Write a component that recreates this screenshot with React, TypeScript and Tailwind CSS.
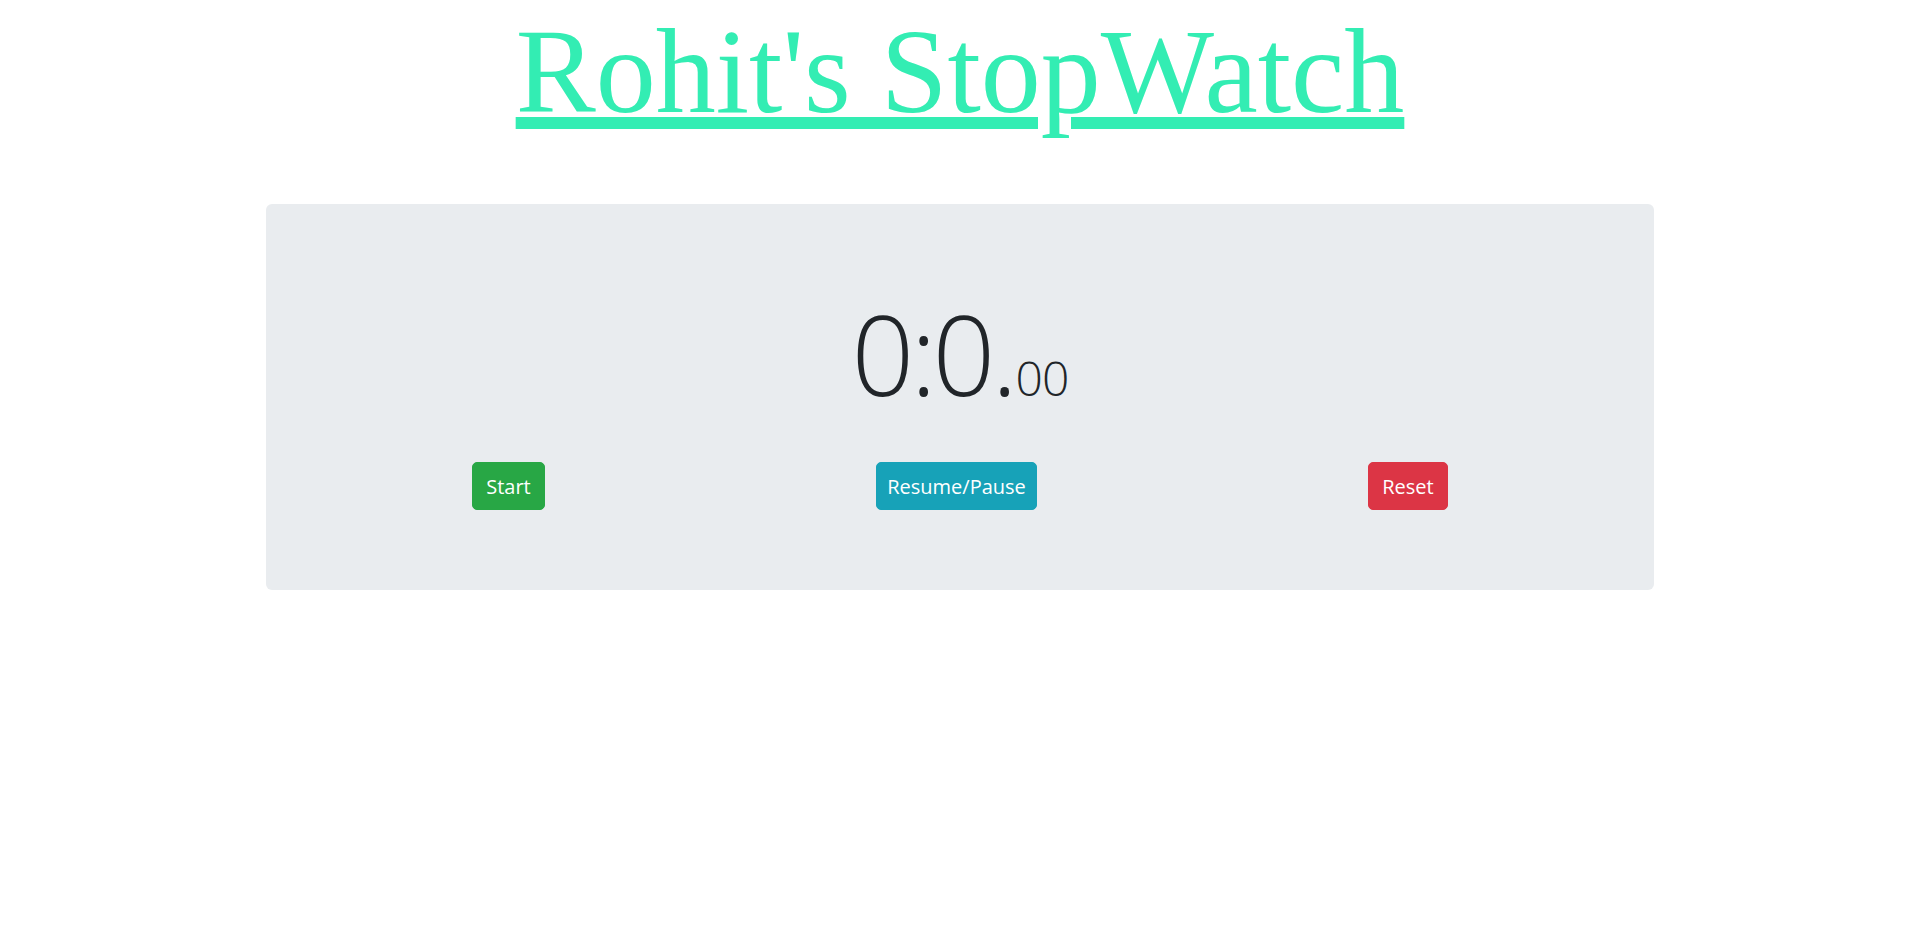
export default function App() {
  return (
    <div className="min-h-screen bg-white font-['Segoe_UI','Open_Sans',sans-serif] text-[#212529]">
      <h1 className="m-0 text-center font-['Liberation_Serif','Times_New_Roman',serif] text-[120px] font-normal leading-[144px]">
        <span className="text-[#33edb3] underline decoration-[12px] underline-offset-[5px]">Rohit's StopWatch</span>
      </h1>

      {/* timer panel */}
      <div className="mx-auto mt-[60px] w-[1388px] rounded-[6px] bg-[#e9ecef] pt-[80px] pb-[80px]">
        <div className="flex h-[178px] items-start justify-center">
          <div className="font-['Open_Sans',sans-serif] font-light leading-[138px] text-[#212529]">
            <span className="text-[110px] tracking-[-4px]">0:0.</span>
            <span className="ml-[2px] text-[48px] tracking-[-1px]">00</span>
          </div>
        </div>

        <div className="flex items-center justify-between px-[206px]">
          <button className="h-[48px] w-[73px] rounded-[5px] border border-[#28a745] bg-[#28a745] pt-[2px] text-[20px] text-white">
            Start
          </button>
          <button className="h-[48px] w-[161px] rounded-[5px] border border-[#17a2b8] bg-[#17a2b8] pt-[2px] text-[20px] text-white">
            Resume/Pause
          </button>
          <button className="h-[48px] w-[80px] rounded-[5px] border border-[#dc3545] bg-[#dc3545] pt-[2px] text-[20px] text-white">
            Reset
          </button>
        </div>
      </div>
    </div>
  );
}
